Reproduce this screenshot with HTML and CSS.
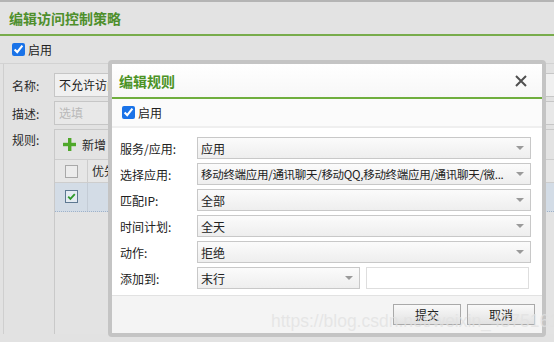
FILE: index.html
```html
<!DOCTYPE html>
<html lang="zh-CN">
<head>
    <meta charset="UTF-8">
    <title>编辑访问控制策略</title>
    <link rel="stylesheet" href="styles.css">
</head>
<body>
    <div class="page">
        <div class="page-title">编辑访问控制策略</div>
        <div class="page-enable">
            <label class="check"><input type="checkbox" checked> 启用</label>
        </div>
        <div class="page-form">
            <div class="page-row">
                <span class="page-label">名称:</span>
                <div class="page-input">不允许访问</div>
            </div>
            <div class="page-row">
                <span class="page-label">描述:</span>
                <div class="page-input placeholder">选填</div>
            </div>
            <div class="page-row rules-row">
                <span class="page-label">规则:</span>
                <div class="rules">
                    <div class="rules-bar">
                        <svg class="plus" width="13" height="13" viewBox="0 0 13 13">
                            <rect x="5" y="0" width="3.4" height="13" fill="#4fa82a"/>
                            <rect x="0" y="4.8" width="13" height="3.4" fill="#4fa82a"/>
                        </svg>
                        <span>新增</span>
                    </div>
                    <div class="rules-head">
                        <div class="cell-check"><span class="box"></span></div>
                        <div class="cell-text">优先级</div>
                    </div>
                    <div class="rules-item">
                        <div class="cell-check">
                            <svg width="13" height="13" viewBox="0 0 13 13">
                                <rect x="0.5" y="0.5" width="12" height="12" fill="#e4ebf2" stroke="#5d7891"/>
                                <path d="M3.2 6.6 L5.4 8.9 L9.8 4.1" fill="none" stroke="#2f9a2b" stroke-width="1.8"/>
                            </svg>
                        </div>
                        <div class="cell-text"></div>
                    </div>
                </div>
            </div>
        </div>
    </div>

    <div class="dialog">
        <div class="dialog-head">
            <span class="dialog-title">编辑规则</span>
            <svg class="close" width="12" height="12" viewBox="0 0 12 12">
                <path d="M1 1 L11 11 M11 1 L1 11" stroke="#505050" stroke-width="2"/>
            </svg>
        </div>
        <div class="dialog-enable">
            <label class="check"><input type="checkbox" checked> 启用</label>
        </div>
        <div class="dialog-form">
            <div class="form-row">
                <span class="form-label">服务/应用:</span>
                <div class="select"><span>应用</span><i class="arrow"></i></div>
            </div>
            <div class="form-row">
                <span class="form-label">选择应用:</span>
                <div class="select"><span class="compact">移动终端应用/通讯聊天/移动QQ,移动终端应用/通讯聊天/微...</span><i class="arrow"></i></div>
            </div>
            <div class="form-row">
                <span class="form-label">匹配IP:</span>
                <div class="select"><span>全部</span><i class="arrow"></i></div>
            </div>
            <div class="form-row">
                <span class="form-label">时间计划:</span>
                <div class="select"><span>全天</span><i class="arrow"></i></div>
            </div>
            <div class="form-row">
                <span class="form-label">动作:</span>
                <div class="select"><span>拒绝</span><i class="arrow"></i></div>
            </div>
            <div class="form-row">
                <span class="form-label">添加到:</span>
                <div class="split">
                    <div class="select"><span>末行</span><i class="arrow"></i></div>
                    <div class="text-input"></div>
                </div>
            </div>
        </div>
        <div class="dialog-foot">
            <button class="btn">提交</button>
            <button class="btn">取消</button>
        </div>
    </div>

    <div class="watermark">https://blog.csdn.net/weixin_43751619</div>
</body>
</html>
```

FILE: styles.css
```css
body {
    margin: 0;
    width: 554px;
    height: 342px;
    overflow: hidden;
    background-color: #e2e2e2;
    font-family: "Noto Sans CJK SC", "Noto Sans", sans-serif;
    font-size: 12px;
    color: #2b2b2b;
    position: relative;
}

/* page behind the dialog */
.page {
    border-top: 2px solid #b4b4b4;
}

.page-title {
    height: 32px;
    line-height: 32px;
    padding-left: 9px;
    font-size: 14px;
    font-weight: bold;
    color: #4e8f2c;
    background-color: #e3e3e3;
    border-bottom: 2px solid #78ac4c;
}

.page-enable {
    height: 27px;
    padding-left: 12px;
    display: flex;
    align-items: center;
    border-bottom: 1px solid #d2d2d2;
}

.check {
    display: flex;
    align-items: center;
    gap: 3px;
    font-size: 12px;
    color: #222;
}

.check input {
    margin: 0;
    width: 13px;
    height: 13px;
    accent-color: #1a73e8;
}

.page-form {
    margin-left: 3px;
    border-left: 1px solid #cfcfcf;
    padding-top: 9px;
    height: 270px;
    box-sizing: border-box;
    overflow: hidden;
}

.page-row {
    display: flex;
    align-items: center;
    margin-bottom: 4px;
}

.page-label {
    width: 50px;
    padding-left: 8px;
    box-sizing: border-box;
    font-size: 12px;
}

.page-input {
    flex: 1;
    height: 22px;
    line-height: 22px;
    padding-left: 4px;
    border: 1px solid #c6c6c6;
    border-right: none;
    background-color: #f0f0f0;
    color: #222;
}

.page-input.placeholder {
    color: #b9b9b9;
    background-color: #e8e8e8;
}

.rules-row {
    align-items: flex-start;
}

.rules-row .page-label {
    padding-top: 2px;
}

.rules {
    flex: 1;
    height: 220px;
    border: 1px solid #c9c9c9;
    border-right: none;
    background-color: #e3e3e3;
}

.rules-bar {
    height: 29px;
    display: flex;
    align-items: center;
    gap: 6px;
    padding-left: 8px;
}

.rules-head {
    display: flex;
    height: 22px;
    border-top: 1px solid #cdcdcd;
    border-bottom: 1px solid #cdcdcd;
    background-color: #e6e6e6;
}

.cell-check {
    width: 32px;
    border-right: 1px solid #cdcdcd;
    display: flex;
    align-items: center;
    justify-content: center;
}

.cell-text {
    padding-left: 4px;
    line-height: 22px;
    font-size: 12px;
}

.box {
    width: 11px;
    height: 11px;
    border: 1px solid #a8a8a8;
    background-color: #ececec;
}

.rules-item {
    display: flex;
    height: 28px;
    background-color: #d3dce6;
    border-bottom: 1px dotted #9fb2c9;
}

.rules-item .cell-check {
    align-items: flex-start;
    padding-top: 7px;
    border-right: 1px solid #c4ccd6;
}

/* dialog */
.dialog {
    position: absolute;
    left: 108px;
    top: 60px;
    width: 430px;
    height: 269px;
    border: 4px solid #c4c4c4;
    border-radius: 4px;
    background-color: #ffffff;
    display: flex;
    flex-direction: column;
}

.dialog-head {
    height: 33px;
    display: flex;
    align-items: center;
    justify-content: space-between;
    padding: 0 15px 0 7px;
    background: linear-gradient(#ffffff, #f7f7f7);
    border-bottom: 2px solid #6fae3d;
}

.dialog-title {
    font-size: 14px;
    font-weight: bold;
    color: #4b9325;
}

.dialog-enable {
    height: 27px;
    padding-left: 10px;
    display: flex;
    align-items: center;
    background-color: #fbfbfb;
    border-bottom: 2px solid #efefef;
}

.dialog-form {
    flex: 1;
    padding: 9px 11px 0 8px;
    display: flex;
    flex-direction: column;
    gap: 4px;
}

.form-row {
    display: flex;
    align-items: center;
    height: 22px;
}

.form-label {
    width: 77px;
    flex: none;
    font-size: 12px;
    color: #222;
    white-space: nowrap;
}

.select {
    flex: 1;
    min-width: 0;
    height: 20px;
    display: flex;
    align-items: center;
    padding-left: 3px;
    border: 1px solid #c8c8c8;
    background: linear-gradient(#fbfbfb, #eeeeee);
    color: #222;
    white-space: nowrap;
    overflow: hidden;
}

.select span {
    flex: 1;
    overflow: hidden;
}

.select .compact {
    font-size: 11.5px;
    letter-spacing: -0.3px;
}

.arrow {
    flex: none;
    width: 0;
    height: 0;
    margin: 0 6px 0 10px;
    border-left: 4px solid transparent;
    border-right: 4px solid transparent;
    border-top: 4px solid #9a9a9a;
}

.split {
    flex: 1;
    display: grid;
    grid-template-columns: 1fr 1fr;
    gap: 6px;
    padding-right: 2px;
}

.text-input {
    height: 20px;
    border: 1px solid #dedede;
    background-color: #ffffff;
}

.dialog-foot {
    height: 38px;
    display: flex;
    justify-content: flex-end;
    align-items: flex-start;
    gap: 6px;
    padding: 8px 7px 0 0;
    box-sizing: border-box;
    background-color: #f4f4f4;
    border-top: 1px solid #e2e2e2;
}

.btn {
    width: 68px;
    height: 21px;
    padding: 0;
    border: 1px solid #a9a9a9;
    background: linear-gradient(#f9f9f9, #e2e2e2);
    font-family: "Noto Sans CJK SC", sans-serif;
    font-size: 12px;
    color: #222;
}

.watermark {
    position: absolute;
    left: 271px;
    top: 311px;
    font-family: "Liberation Sans", Arial, sans-serif;
    font-size: 17.5px;
    color: rgba(225, 225, 225, 0.75);
    white-space: nowrap;
}
```
